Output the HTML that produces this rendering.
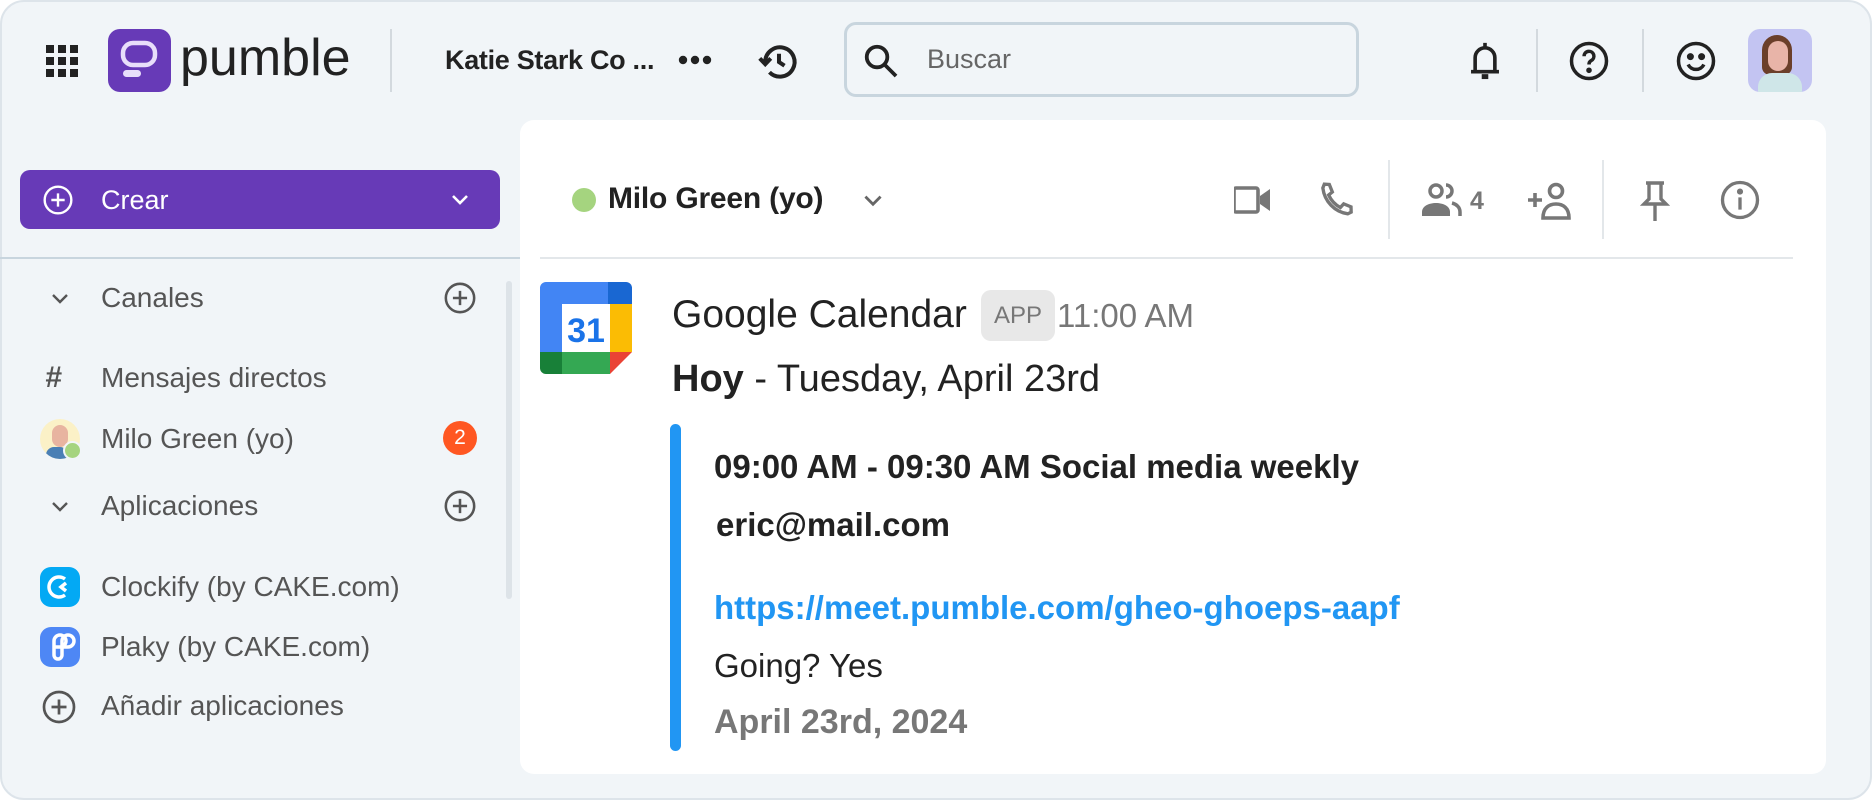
<!DOCTYPE html>
<html><head><meta charset="utf-8"><style>
*{margin:0;padding:0;box-sizing:border-box}
body{width:1874px;height:802px;background:#fff;font-family:"Liberation Sans",sans-serif;position:relative;overflow:hidden}
.frame{position:absolute;left:0;top:0;width:1872px;height:800px;background:#f1f5f8;border:2px solid #dde4ea;border-radius:24px}
.a{position:absolute;white-space:nowrap}
.side{color:#555;font-size:28px;line-height:30px}
.msg{font-size:33px;line-height:38px}
svg{position:absolute}
</style></head><body>
<div class="frame"></div>
<svg style="left:46px;top:45px" width="32" height="32" viewBox="0 0 32 32" fill="#222">
<rect x="0" y="0" width="8" height="8"/><rect x="12" y="0" width="8" height="8"/><rect x="24" y="0" width="8" height="8"/>
<rect x="0" y="12" width="8" height="8"/><rect x="12" y="12" width="8" height="8"/><rect x="24" y="12" width="8" height="8"/>
<rect x="0" y="24" width="8" height="8"/><rect x="12" y="24" width="8" height="8"/><rect x="24" y="24" width="8" height="8"/></svg>
<div class="a" style="left:108px;top:29px;width:63px;height:63px;background:#673ab7;border-radius:12px"></div>
<svg style="left:108px;top:29px" width="63" height="63" viewBox="0 0 63 63"><rect x="15" y="14" width="32" height="22" rx="10" fill="none" stroke="#e8defa" stroke-width="4.5"/><rect x="15" y="41" width="18" height="7" rx="3.5" fill="#e8defa"/></svg>
<div class="a" style="left:180px;top:28px;font-size:52px;line-height:60px;color:#222">pumble</div>
<div class="a" style="left:390px;top:29px;width:2px;height:63px;background:#d3d9de"></div>
<div class="a" style="left:445px;top:45px;font-size:27px;line-height:30px;color:#222;font-weight:bold;letter-spacing:-0.3px">Katie Stark Co ...</div>
<svg style="left:678px;top:53px" width="34" height="14" viewBox="0 0 34 14" fill="#222"><circle cx="5" cy="7" r="4.2"/><circle cx="17" cy="7" r="4.2"/><circle cx="29" cy="7" r="4.2"/></svg>
<svg style="left:757px;top:40px" width="44" height="44" viewBox="0 0 24 24" fill="none" stroke="#222" stroke-width="2.2"><path d="M4.5 12a8 8 0 1 1 2.3 5.6"/><path d="M1.5 10l3 3.2 3-3.2" fill="none"/><path d="M12 7.5V12l3 2"/></svg>
<div class="a" style="left:844px;top:22px;width:515px;height:75px;border:3px solid #c8d5de;border-radius:12px"></div>
<svg style="left:862px;top:42px" width="38" height="38" viewBox="0 0 24 24" fill="none" stroke="#222" stroke-width="2.4"><circle cx="9.5" cy="9.5" r="6.5"/><path d="M14.5 14.5l7 7"/></svg>
<div class="a" style="left:927px;top:44px;font-size:27px;line-height:30px;color:#666">Buscar</div>
<svg style="left:1465px;top:38px" width="40" height="46" viewBox="0 0 24 28" fill="none" stroke="#222" stroke-width="2.2"><path d="M12 3v2M6 20V12a6 6 0 0 1 12 0v8M3.5 20.5h17"/><path d="M10 23.5h4" stroke-width="3"/></svg>
<div class="a" style="left:1536px;top:29px;width:2px;height:63px;background:#d3d9de"></div>
<svg style="left:1568px;top:40px" width="42" height="42" viewBox="0 0 24 24" fill="none" stroke="#222" stroke-width="2"><circle cx="12" cy="12" r="10"/><path d="M9.2 9.3a2.8 2.8 0 1 1 4 2.5c-.9.5-1.2 1.1-1.2 2.2"/><circle cx="12" cy="17.3" r="0.6" fill="#222"/></svg>
<div class="a" style="left:1642px;top:29px;width:2px;height:63px;background:#d3d9de"></div>
<svg style="left:1675px;top:40px" width="42" height="42" viewBox="0 0 24 24" fill="none" stroke="#222" stroke-width="2"><circle cx="12" cy="12" r="10"/><circle cx="8.8" cy="9.5" r="1" fill="#222"/><circle cx="15.2" cy="9.5" r="1" fill="#222"/><path d="M7.5 14a5 5 0 0 0 9 0"/></svg>
<div class="a" style="left:1748px;top:29px;width:64px;height:63px;background:#c3c4f2;border-radius:12px;overflow:hidden">
<div style="position:absolute;left:14px;top:6px;width:30px;height:40px;background:#6b3f2a;border-radius:15px 15px 8px 8px"></div>
<div style="position:absolute;left:20px;top:12px;width:20px;height:30px;background:#e8b4a8;border-radius:10px"></div>
<div style="position:absolute;left:10px;top:44px;width:44px;height:30px;background:#cfe6e8;border-radius:14px 14px 0 0"></div></div>
<div class="a" style="left:20px;top:170px;width:480px;height:59px;background:#673ab7;border-radius:10px"></div>
<svg style="left:42px;top:184px" width="32" height="32" viewBox="0 0 24 24" fill="none" stroke="#fff" stroke-width="1.8"><circle cx="12" cy="12" r="10"/><path d="M12 7v10M7 12h10"/></svg>
<div class="a" style="left:101px;top:185px;font-size:27px;line-height:30px;color:#fff">Crear</div>
<svg style="left:448px;top:190px" width="24" height="20" viewBox="0 0 24 20" fill="none" stroke="#fff" stroke-width="2.6"><path d="M5 6l7 7 7-7"/></svg>
<div class="a" style="left:0;top:257px;width:520px;height:2px;background:#c8d5de"></div>
<div class="a" style="left:506px;top:281px;width:6px;height:318px;background:#dde3e8;border-radius:3px"></div>
<svg style="left:48px;top:289px" width="24" height="20" viewBox="0 0 24 20" fill="none" stroke="#555" stroke-width="2.4"><path d="M5 6l7 7 7-7"/></svg>
<div class="a side" style="left:101px;top:283px">Canales</div>
<svg style="left:443px;top:281px" width="34" height="34" viewBox="0 0 24 24" fill="none" stroke="#555" stroke-width="1.8"><circle cx="12" cy="12" r="10"/><path d="M12 7v10M7 12h10"/></svg>
<div class="a" style="left:45px;top:361px;font-size:30px;line-height:34px;color:#555;font-weight:bold;font-style:italic">#</div>
<div class="a side" style="left:101px;top:363px">Mensajes directos</div>
<div class="a" style="left:40px;top:419px;width:40px;height:40px;border-radius:50%;background:#fbf1c7;overflow:hidden"><div style="position:absolute;left:12px;top:6px;width:16px;height:22px;background:#e8b4a0;border-radius:8px"></div><div style="position:absolute;left:6px;top:28px;width:22px;height:14px;background:#4a7fb5;border-radius:8px 8px 0 0"></div></div>
<div class="a" style="left:63px;top:441px;width:19px;height:19px;border-radius:50%;background:#a5d47f;border:2px solid #f1f5f8"></div>
<div class="a side" style="left:101px;top:424px">Milo Green (yo)</div>
<div class="a" style="left:443px;top:421px;width:34px;height:34px;border-radius:50%;background:#ff5722;color:#fff;font-size:21px;line-height:34px;text-align:center">2</div>
<svg style="left:48px;top:497px" width="24" height="20" viewBox="0 0 24 20" fill="none" stroke="#555" stroke-width="2.4"><path d="M5 6l7 7 7-7"/></svg>
<div class="a side" style="left:101px;top:491px">Aplicaciones</div>
<svg style="left:443px;top:489px" width="34" height="34" viewBox="0 0 24 24" fill="none" stroke="#555" stroke-width="1.8"><circle cx="12" cy="12" r="10"/><path d="M12 7v10M7 12h10"/></svg>
<div class="a" style="left:40px;top:567px;width:40px;height:40px;border-radius:11px;background:#03a9f4"></div>
<svg style="left:40px;top:567px" width="40" height="40" viewBox="0 0 40 40" fill="none" stroke="#fff" stroke-width="3.5"><path d="M25 12a10 10 0 1 0 0 16"/><path d="M26 16l-5 4 5 4"/></svg>
<div class="a side" style="left:101px;top:572px">Clockify (by CAKE.com)</div>
<div class="a" style="left:40px;top:627px;width:40px;height:40px;border-radius:11px;background:#4e87f5"></div>
<svg style="left:40px;top:627px" width="40" height="40" viewBox="0 0 40 40" fill="none" stroke="#fff" stroke-width="3.5"><path d="M20 20a6 6 0 1 0-6-6v14a4 4 0 0 0 8 0V14a6 6 0 1 1 6 6H14"/></svg>
<div class="a side" style="left:101px;top:632px">Plaky (by CAKE.com)</div>
<svg style="left:41px;top:689px" width="36" height="36" viewBox="0 0 24 24" fill="none" stroke="#555" stroke-width="1.8"><circle cx="12" cy="12" r="10"/><path d="M12 7v10M7 12h10"/></svg>
<div class="a side" style="left:101px;top:691px">Añadir aplicaciones</div>
<div class="a" style="left:520px;top:120px;width:1306px;height:654px;background:#fff;border-radius:14px"></div>
<div class="a" style="left:572px;top:188px;width:24px;height:24px;border-radius:50%;background:#a5d47f"></div>
<div class="a" style="left:608px;top:182px;font-size:30px;line-height:34px;color:#222;font-weight:bold;letter-spacing:-0.2px">Milo Green (yo)</div>
<svg style="left:860px;top:190px" width="26" height="22" viewBox="0 0 24 20" fill="none" stroke="#666" stroke-width="2.6"><path d="M5 6l7 7 7-7"/></svg>
<svg style="left:1234px;top:184px" width="38" height="32" viewBox="0 0 38 32" fill="#777"><rect x="0" y="4" width="24" height="24" rx="2" fill="none" stroke="#777" stroke-width="3.6"/><path d="M26 12l10-7v22l-10-7z"/></svg>
<svg style="left:1316px;top:180px" width="40" height="40" viewBox="0 0 24 24" fill="none" stroke="#777" stroke-width="2"><path d="M5 2.5l3 .2 1.8 4.5-2.2 1.8c1.5 3.3 3.700 5.8 7 7.5l2-2.2 4.4 1.8.1 3.2-2 1c-8-1.2-14-7.5-15-15.5z"/></svg>
<div class="a" style="left:1388px;top:160px;width:2px;height:79px;background:#e3e7ea"></div>
<svg style="left:1420px;top:182px" width="42" height="36" viewBox="0 0 42 36" fill="#777"><circle cx="16" cy="9" r="6" fill="none" stroke="#777" stroke-width="3.5"/><path d="M2 34v-4c0-6 7-9 14-9s14 3 14 9v4z"/><path d="M26 3a6 6 0 0 1 0 12M32 21c4 1 8 4 8 9v4" fill="none" stroke="#777" stroke-width="3.5"/></svg>
<div class="a" style="left:1470px;top:186px;font-size:25px;line-height:30px;color:#777;font-weight:bold">4</div>
<svg style="left:1526px;top:180px" width="48" height="40" viewBox="0 0 48 40"><path d="M2 20h14M9 13v14" stroke="#777" stroke-width="3.6"/><circle cx="30" cy="11" r="6.5" fill="none" stroke="#777" stroke-width="3.6"/><path d="M17 38c0-10 6-14 13-14s13 4 13 14z" fill="none" stroke="#777" stroke-width="3.6"/></svg>
<div class="a" style="left:1602px;top:160px;width:2px;height:79px;background:#e3e7ea"></div>
<svg style="left:1640px;top:180px" width="30" height="42" viewBox="0 0 30 42" fill="none" stroke="#777" stroke-width="3.4"><path d="M6 3h18M9 3v16l-5 5h22l-5-5V3M15 24v17"/></svg>
<svg style="left:1719px;top:179px" width="42" height="42" viewBox="0 0 24 24" fill="none" stroke="#777" stroke-width="1.9"><circle cx="12" cy="12" r="10"/><path d="M12 10.5v7"/><circle cx="12" cy="7.2" r="0.8" fill="#777"/></svg>
<div class="a" style="left:540px;top:257px;width:1253px;height:2px;background:#e3e7ea"></div>
<svg style="left:540px;top:282px" width="92" height="92" viewBox="0 0 92 92">
<path d="M6 0h62v22H22v48H0V6a6 6 0 0 1 6-6z" fill="#4285f4"/>
<path d="M68 0h18a6 6 0 0 1 6 6v16H68z" fill="#1967d2"/>
<rect x="70" y="22" width="22" height="48" fill="#fbbc04"/>
<path d="M22 70h48v22H22z" fill="#34a853"/>
<path d="M0 70h22v22H6a6 6 0 0 1-6-6z" fill="#188038"/>
<path d="M70 70h22L70 92z" fill="#ea4335"/>
<rect x="22" y="22" width="48" height="48" fill="#fff"/>
<text x="46" y="60" text-anchor="middle" font-family="Liberation Sans,sans-serif" font-size="34" fill="#1a73e8" font-weight="bold">31</text></svg>
<div class="a" style="left:672px;top:293px;font-size:39px;line-height:44px;color:#222">Google Calendar</div>
<div class="a" style="left:981px;top:290px;width:74px;height:51px;background:#e8e8e8;border-radius:10px;color:#777;font-size:24px;line-height:51px;text-align:center">APP</div>
<div class="a" style="left:1057px;top:297px;font-size:33px;line-height:38px;color:#777">11:00 AM</div>
<div class="a" style="left:672px;top:357px;font-size:38px;line-height:44px;color:#222"><b>Hoy</b> - Tuesday, April 23rd</div>
<div class="a" style="left:670px;top:424px;width:11px;height:327px;background:#2196f3;border-radius:6px"></div>
<div class="a msg" style="left:714px;top:448px;color:#222;font-weight:bold">09:00 AM - 09:30 AM Social media weekly</div>
<div class="a msg" style="left:716px;top:506px;color:#222;font-weight:bold">eric@mail.com</div>
<div class="a msg" style="left:714px;top:589px;color:#2196f3;font-weight:bold">https://meet.pumble.com/gheo-ghoeps-aapf</div>
<div class="a msg" style="left:714px;top:647px;color:#222">Going? Yes</div>
<div class="a msg" style="left:714px;top:703px;color:#777;font-weight:bold;font-size:34px">April 23rd, 2024</div>
</body></html>
